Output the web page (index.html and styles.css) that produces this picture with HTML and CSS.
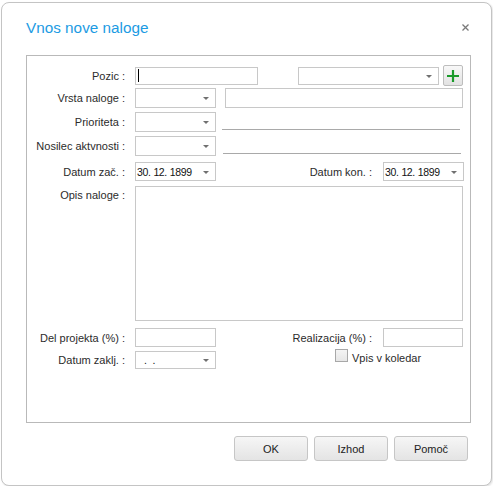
FILE: index.html
```html
<!DOCTYPE html>
<html lang="sl">
<head>
  <meta charset="UTF-8" />
  <title>Vnos nove naloge</title>
  <link rel="stylesheet" href="styles.css">
</head>
<body>
  <div class="dialog">
    <div class="dialog-head">
      <span class="dialog-title">Vnos nove naloge</span>
      <svg class="close" width="7" height="7" viewBox="0 0 7 7">
        <path d="M0.5 0.5 L6.5 6.5 M6.5 0.5 L0.5 6.5" stroke="#7a7a7a" stroke-width="1.3" />
      </svg>
    </div>

    <div class="panel">
      <div class="row r1">
        <label class="lbl">Pozic :</label>
        <div class="field w123"><span class="caret"></span></div>
        <div class="combo w141 ml40"><span class="arrow"></span></div>
        <div class="btn-add">
          <svg width="12" height="12" viewBox="0 0 12 12">
            <path d="M6 0 V12 M0 6 H12" stroke="#1a9a2a" stroke-width="2.2" />
          </svg>
        </div>
      </div>

      <div class="row r2">
        <label class="lbl">Vrsta naloge :</label>
        <div class="combo w81"><span class="arrow"></span></div>
        <div class="field w238 ml9"></div>
      </div>

      <div class="row r3">
        <label class="lbl">Prioriteta :</label>
        <div class="combo w81"><span class="arrow"></span></div>
        <div class="underline ml6"></div>
      </div>

      <div class="row r3">
        <label class="lbl">Nosilec aktvnosti :</label>
        <div class="combo w81"><span class="arrow"></span></div>
        <div class="underline ml7"></div>
      </div>

      <div class="row r5">
        <label class="lbl">Datum zač. :</label>
        <div class="combo w81"><span class="val">30. 12. 1899</span><span class="arrow"></span></div>
        <label class="lbl-right">Datum kon. :</label>
        <div class="combo w81"><span class="val">30. 12. 1899</span><span class="arrow"></span></div>
      </div>

      <div class="row r6">
        <label class="lbl top">Opis naloge :</label>
        <div class="memo"></div>
      </div>

      <div class="row r7">
        <label class="lbl">Del projekta (%) :</label>
        <div class="field w81"></div>
        <label class="lbl-right">Realizacija (%) :</label>
        <div class="field w80"></div>
      </div>

      <div class="row r8">
        <label class="lbl">Datum zaklj. :</label>
        <div class="combo w81"><span class="val dots">.&nbsp;&nbsp;.</span><span class="arrow"></span></div>
        <div class="check">
          <span class="box"></span>
          <span>Vpis v koledar</span>
        </div>
      </div>
    </div>

    <div class="buttons">
      <button>OK</button>
      <button>Izhod</button>
      <button>Pomoč</button>
    </div>
  </div>
</body>
</html>
```

FILE: styles.css
```css
body {
  margin: 0;
  background: #ffffff;
  font-family: "Liberation Sans", Arial, sans-serif;
  font-size: 11px;
  color: #2b2b2b;
}

.dialog {
  margin: 2px 0 0 1px;
  width: 489px;
  height: 482px;
  border: 1px solid #c4c4c4;
  border-radius: 8px;
  box-shadow: 1px 1px 2px rgba(0, 0, 0, 0.12);
  background: #ffffff;
}

.dialog-head {
  height: 52px;
  display: flex;
  align-items: center;
  padding: 0 22px 0 24px;
}

.dialog-title {
  font-size: 15.3px;
  color: #1c9be3;
  margin-top: -3px;
  flex: 1;
}

.close {
  margin-top: -3px;
}

.panel {
  box-sizing: border-box;
  margin-left: 24px;
  width: 445px;
  height: 368px;
  border: 1px solid #b9b9b9;
  padding-top: 9px;
}

.row {
  display: flex;
  align-items: center;
  height: 20px;
}

.lbl {
  width: 98px;
  margin-right: 10px;
  text-align: right;
  white-space: nowrap;
}

.lbl.top {
  align-self: flex-start;
  padding-top: 3px;
}

.lbl-right {
  margin-left: auto;
  margin-right: 11px;
}

.r1 { height: 21px; }
.r2 { margin-top: 2px; height: 20px; }
.r3 { margin-top: 4px; height: 20px; }
.r5 { margin-top: 6px; height: 19px; padding-right: 6px; }
.r6 { margin-top: 5px; height: 135px; }
.r7 { margin-top: 7px; height: 19px; padding-right: 7px; }
.r8 { margin-top: 4px; height: 18px; }

.field,
.combo {
  box-sizing: border-box;
  height: 100%;
  border: 1px solid #c8c8c8;
  background: #ffffff;
  position: relative;
  display: flex;
  align-items: center;
}

.r1 .field { height: 18px; }
.r1 .combo { height: 18px; }

.w80 { width: 80px; }
.w81 { width: 81px; }
.w123 { width: 123px; }
.w141 { width: 141px; }
.w238 { width: 238px; }
.ml40 { margin-left: 40px; }
.ml9 { margin-left: 9px; }
.ml6 { margin-left: 6px; }
.ml7 { margin-left: 7px; }

.caret {
  margin-left: 2px;
  width: 1px;
  height: 13px;
  background: #000000;
}

.arrow {
  position: absolute;
  right: 6px;
  top: 50%;
  margin-top: -1px;
  width: 0;
  height: 0;
  border-left: 3px solid transparent;
  border-right: 3px solid transparent;
  border-top: 3px solid #707070;
}

.val {
  margin-left: 1px;
  color: #111111;
  font-size: 10.5px;
  letter-spacing: -0.4px;
  word-spacing: 0.5px;
}

.val.dots {
  margin-left: 8px;
}

.btn-add {
  box-sizing: border-box;
  margin-left: 4px;
  width: 20px;
  height: 21px;
  border: 1px solid #bdbdbd;
  border-radius: 2px;
  background: linear-gradient(#f8f8f8, #e2e2e2);
  display: flex;
  align-items: center;
  justify-content: center;
}

.underline {
  align-self: flex-end;
  margin-bottom: 2px;
  width: 238px;
  height: 1px;
  background: #a9a9a9;
}

.memo {
  box-sizing: border-box;
  width: 328px;
  height: 135px;
  border: 1px solid #c8c8c8;
}

.check {
  align-self: flex-start;
  margin-top: -4px;
  margin-left: 119px;
  display: flex;
  align-items: center;
  gap: 4px;
}

.check .box {
  box-sizing: border-box;
  width: 13px;
  height: 13px;
  border: 1px solid #a8a8a8;
  background: linear-gradient(#f4f4f4, #e6e6e6);
}

.check span:last-child {
  margin-top: 5px;
}

.buttons {
  display: flex;
  justify-content: flex-end;
  gap: 6px;
  margin-top: 13px;
  padding-right: 23px;
}

.buttons button {
  width: 74px;
  height: 25px;
  border: 1px solid #c6c6c6;
  border-radius: 3px;
  background: linear-gradient(#f6f6f6, #e4e4e4);
  font-family: "Liberation Sans", Arial, sans-serif;
  font-size: 11px;
  color: #222222;
  padding: 0;
}
```
